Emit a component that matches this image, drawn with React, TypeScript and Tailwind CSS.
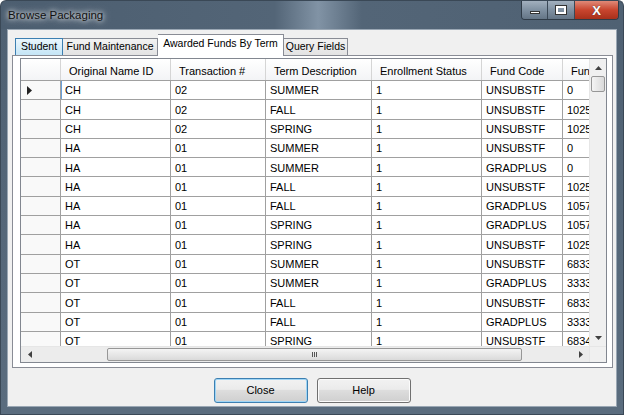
import React from 'react';

const columns = [
    { name: 'Original Name ID', width: 'w-[110px]' },
    { name: 'Transaction #', width: 'w-[95px]' },
    { name: 'Term Description', width: 'w-[106px]' },
    { name: 'Enrollment Status', width: 'w-[110px]' },
    { name: 'Fund Code', width: 'w-[81px]' },
    { name: 'Fund Amount', width: 'w-[100px]' },
];

const tabs = [
    { name: 'Student', width: 'w-[48px]', hover: true },
    { name: 'Fund Maintenance', width: 'w-[95px]' },
    { name: 'Awarded Funds By Term', width: 'w-[126px]', active: true },
    { name: 'Query Fields', width: 'w-[64px]' },
];

const rows = [
    ['CH', '02', 'SUMMER', '1', 'UNSUBSTF', '0'],
    ['CH', '02', 'FALL', '1', 'UNSUBSTF', '1025'],
    ['CH', '02', 'SPRING', '1', 'UNSUBSTF', '1025'],
    ['HA', '01', 'SUMMER', '1', 'UNSUBSTF', '0'],
    ['HA', '01', 'SUMMER', '1', 'GRADPLUS', '0'],
    ['HA', '01', 'FALL', '1', 'UNSUBSTF', '1025'],
    ['HA', '01', 'FALL', '1', 'GRADPLUS', '1057'],
    ['HA', '01', 'SPRING', '1', 'GRADPLUS', '1057'],
    ['HA', '01', 'SPRING', '1', 'UNSUBSTF', '1025'],
    ['OT', '01', 'SUMMER', '1', 'UNSUBSTF', '6833'],
    ['OT', '01', 'SUMMER', '1', 'GRADPLUS', '3333'],
    ['OT', '01', 'FALL', '1', 'UNSUBSTF', '6833'],
    ['OT', '01', 'FALL', '1', 'GRADPLUS', '3333'],
    ['OT', '01', 'SPRING', '1', 'UNSUBSTF', '6834'],
];

function Arrow({ dir }: { dir: 'up' | 'down' | 'left' | 'right' }) {
    const pts = {
        up: '0,4 3.5,0 7,4',
        down: '0,0 3.5,4 7,0',
        left: '4,0 0,3.5 4,7',
        right: '0,0 4,3.5 0,7',
    }[dir];
    const size = dir === 'up' || dir === 'down' ? { w: 7, h: 4 } : { w: 4, h: 7 };
    return (
        <svg width={size.w} height={size.h} viewBox={`0 0 ${size.w} ${size.h}`}>
            <polygon points={pts} fill="#404040" />
        </svg>
    );
}

function TitleBar() {
    return (
        <div className="h-[29px] shrink-0 flex items-start justify-between rounded-t-[6px] border-t border-x border-[#3a4856] bg-[linear-gradient(to_right,#4c5e70,#536577_44%,#8193a5_51%,#536577_58%,#4f6173)]">
            <span className="mt-[6px] ml-[7px] text-[11.5px] text-[#111] font-['Liberation_Sans',sans-serif] [text-shadow:0_0_5px_#fff,0_0_8px_rgba(255,255,255,0.8)]">
                Browse Packaging
            </span>
            <div className="flex h-[19px] mr-[4px] rounded-b-[4px] border border-t-0 border-[#2f3b47] overflow-hidden">
                <div className="w-[26px] flex items-center justify-center border-r border-[#3a4856] bg-[linear-gradient(to_bottom,#a2b0be,#7f90a1_50%,#647586)]">
                    <div className="w-[10px] h-[3px] bg-white border border-[#333] mt-[5px]" />
                </div>
                <div className="w-[27px] flex items-center justify-center border-r border-[#3a4856] bg-[linear-gradient(to_bottom,#a2b0be,#7f90a1_50%,#647586)]">
                    <div className="w-[10px] h-[8px] border-[2px] border-white outline outline-1 outline-[#333]" />
                </div>
                <div className="w-[43px] flex items-center justify-center bg-[linear-gradient(to_bottom,#e08a78,#c8452e_50%,#a8301b)]">
                    <span className="text-white text-[13px] font-bold leading-none font-['Liberation_Sans',sans-serif] [text-shadow:0_0_1px_#333]">X</span>
                </div>
            </div>
        </div>
    );
}

function Tabs() {
    return (
        <div className="flex items-end h-[25px] pl-[7px] text-[10.5px]">
            {tabs.map((tab, i) => {
                let cls = 'h-[17px] bg-[linear-gradient(to_bottom,#f2f2f2,#e3e3e3)] border-[#898c95]';
                if (tab.hover) cls = 'h-[17px] bg-[linear-gradient(to_bottom,#eaf6fd,#c4e5f6)] border-[#3c7fb1]';
                if (tab.active) cls = 'h-[22px] pb-[3px] bg-white border-[#898c95] -mb-px relative z-10';
                return (
                    <div
                        key={tab.name}
                        className={`${tab.width} ${cls} shrink-0 flex items-center justify-center whitespace-nowrap border border-b-0 ${i > 0 ? 'border-l-0' : ''}`}
                    >
                        {tab.name}
                    </div>
                );
            })}
        </div>
    );
}

function VScroll() {
    return (
        <div className="w-[17px] shrink-0 flex flex-col bg-[#f0f0f0] border-l border-[#e6e6e6]">
            <div className="h-[17px] flex items-center justify-center">
                <Arrow dir="up" />
            </div>
            <div className="h-[16px] mx-[1px] rounded-[2px] border border-[#979797] bg-[linear-gradient(to_right,#f4f4f4,#dadada)]" />
            <div className="flex-1" />
            <div className="h-[17px] flex items-center justify-center">
                <Arrow dir="down" />
            </div>
        </div>
    );
}

function HScroll() {
    return (
        <div className="h-[16px] shrink-0 flex border-t border-[#e6e6e6]">
            <div className="flex-1 min-w-0 flex items-center bg-[#ececec]">
                <div className="w-[17px] shrink-0 h-full flex items-center justify-center">
                    <Arrow dir="left" />
                </div>
                <div className="ml-[69px] w-[415px] shrink-0 h-[13px] rounded-[2px] border border-[#979797] bg-[linear-gradient(to_bottom,#f4f4f4,#dadada)] flex items-center justify-center">
                    <div className="flex gap-[1px]">
                        <div className="w-px h-[5px] bg-[#555]" />
                        <div className="w-px h-[5px] bg-[#555]" />
                        <div className="w-px h-[5px] bg-[#555]" />
                    </div>
                </div>
                <div className="flex-1" />
                <div className="w-[17px] shrink-0 h-full flex items-center justify-center">
                    <Arrow dir="right" />
                </div>
            </div>
            <div className="w-[17px] shrink-0 bg-[#f0f0f0] border-l border-[#e6e6e6]" />
        </div>
    );
}

function DataGrid() {
    return (
        <div className="flex-1 min-w-0 min-h-0 flex flex-col border border-[#828790] bg-white overflow-hidden">
            <div className="flex-1 min-h-0 flex">
                <div className="flex-1 min-w-0 overflow-hidden">
                    {/* header */}
                    <div className="flex h-[22px] border-b border-[#a0a0a0] bg-[linear-gradient(to_bottom,#ffffff,#f3f4f6)]">
                        <div className="w-[40px] shrink-0 border-r border-[#d5d5d5]" />
                        {columns.map((col) => (
                            <div
                                key={col.name}
                                className={`${col.width} shrink-0 pl-[8px] pt-[3px] flex items-center border-r border-[#d5d5d5] whitespace-nowrap overflow-hidden`}
                            >
                                {col.name}
                            </div>
                        ))}
                    </div>
                    {rows.map((row, i) => (
                        <div key={i} className="flex h-[19.3px] border-b border-[#a0a0a0]">
                            <div className="w-[40px] shrink-0 pl-[6px] flex items-center bg-[#f9f9f9] border-r border-[#a0a0a0]">
                                {i === 0 && (
                                    <svg width="5" height="9" viewBox="0 0 5 9">
                                        <polygon points="0,0 5,4.5 0,9" fill="#222" />
                                    </svg>
                                )}
                            </div>
                            {row.map((cell, j) => (
                                <div
                                    key={j}
                                    className={`${columns[j].width} shrink-0 pl-[4px] pt-px flex items-center border-r border-[#a0a0a0] whitespace-nowrap overflow-hidden ${
                                        i === 0 && j === 0 ? 'shadow-[inset_1px_0_0_#6aa0d8]' : ''
                                    }`}
                                >
                                    {cell}
                                </div>
                            ))}
                        </div>
                    ))}
                </div>
                <VScroll />
            </div>
            <HScroll />
        </div>
    );
}

function Button({ label, primary }: { label: string; primary?: boolean }) {
    return (
        <button
            className={`w-[94px] h-[25px] rounded-[3px] border text-[11px] bg-[linear-gradient(to_bottom,#f2f2f2_0%,#ebebeb_45%,#dddddd_50%,#cfcfcf_100%)] ${
                primary ? 'border-[#3c7fb1] shadow-[inset_0_0_0_1px_#9fd5f5]' : 'border-[#707070] shadow-[inset_0_0_0_1px_#fbfbfb]'
            }`}
        >
            {label}
        </button>
    );
}

export default function App() {
    return (
        <div className="w-[624px] h-[415px] bg-white font-['Liberation_Sans',Arial,sans-serif] text-[11px] text-black overflow-hidden">
            <div className="w-full h-full flex flex-col">
                <TitleBar />
                <div className="flex-1 flex min-h-0">
                    <div className="w-[7px] shrink-0 bg-[linear-gradient(to_bottom,#4f6173,#5a6c7e)] border-l border-[#3a4856]" />
                    <div className="flex-1 min-w-0 flex flex-col bg-[#f0f0f0] border border-[#9aa7b4]">
                        <Tabs />
                        <div className="h-[313px] ml-[4px] mr-[3px] flex flex-col bg-white border border-[#898c95] pl-[7px] pr-[5px] pt-[2px] pb-[4px]">
                            <DataGrid />
                        </div>
                        <div className="flex justify-center gap-[9px] mt-[10px]">
                            <Button label="Close" primary />
                            <Button label="Help" />
                        </div>
                    </div>
                    <div className="w-[7px] shrink-0 bg-[linear-gradient(to_bottom,#4f6173,#5a6c7e)] border-r border-[#3a4856]" />
                </div>
                <div className="h-[8px] shrink-0 bg-[#5a6c7e] border-x border-b border-[#3a4856]" />
            </div>
        </div>
    );
}
